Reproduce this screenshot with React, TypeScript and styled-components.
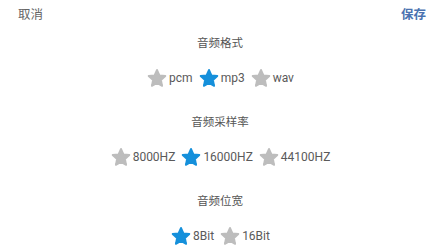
import React from 'react'
import styled, { createGlobalStyle } from 'styled-components'

const GlobalStyle = createGlobalStyle`
  html, body {
    margin: 0;
    padding: 0;
    background: #ffffff;
    font-family: Roboto, "Noto Sans CJK SC", sans-serif;
  }
`

type Group = { title: string; options: string[]; selected: number }

const groups: Group[] = [
  { title: '音频格式', options: ['pcm', 'mp3', 'wav'], selected: 1 },
  { title: '音频采样率', options: ['8000HZ', '16000HZ', '44100HZ'], selected: 1 },
  { title: '音频位宽', options: ['8Bit', '16Bit'], selected: 0 },
]

function Star({ active }: { active: boolean }) {
  return (
    <S.StarIcon viewBox='0 0 24 24' $active={active}>
      <path d='M12 3.2l2.7 5.9 6.4.7-4.8 4.4 1.3 6.4L12 17.4l-5.6 3.2 1.3-6.4-4.8-4.4 6.4-.7z' />
    </S.StarIcon>
  )
}

export default function App() {
  return (
    <>
      <GlobalStyle/>
      <S.Page>
        <S.Header>
          <S.Cancel>取消</S.Cancel>
          <S.Save>保存</S.Save>
        </S.Header>

        {groups.map(g => (
          <S.Section key={g.title}>
            <S.Title>{g.title}</S.Title>
            <S.Options>
              {g.options.map((o, i) => (
                <S.Option key={o}>
                  <Star active={i === g.selected}/>
                  <span>{o}</span>
                </S.Option>
              ))}
            </S.Options>
          </S.Section>
        ))}
      </S.Page>
    </>
  )
}

const S = {
  Page: styled.div`
    width: 440px;
    height: 251px;
    box-sizing: border-box;
    overflow: hidden;
  `,

  Header: styled.div`
    display: flex;
    justify-content: space-between;
    align-items: center;
    height: 26px;
    padding: 0 14px 0 18px;
  `,

  Cancel: styled.div`
    font-size: 12.5px;
    color: #666666;
  `,

  Save: styled.div`
    font-size: 12.5px;
    font-weight: bold;
    color: #4a72b0;
  `,

  Section: styled.div`
    display: flex;
    flex-direction: column;
    align-items: center;
    padding-top: 10px;
    margin-bottom: 16px;
  `,

  Title: styled.div`
    font-size: 11.5px;
    line-height: 14px;
    color: #555555;
  `,

  Options: styled.div`
    display: flex;
    align-items: center;
    gap: 5px;
    margin-top: 17px;
  `,

  Option: styled.div`
    display: flex;
    align-items: center;
    gap: 1px;
    font-size: 12px;
    color: #5a5a5a;
  `,

  StarIcon: styled.svg<{ $active: boolean }>`
    width: 22px;
    height: 22px;
    fill: ${p => (p.$active ? '#1590db' : '#bdbdbd')};
    stroke: ${p => (p.$active ? '#1590db' : '#bdbdbd')};
    stroke-width: 2;
    stroke-linejoin: round;
  `,
}
